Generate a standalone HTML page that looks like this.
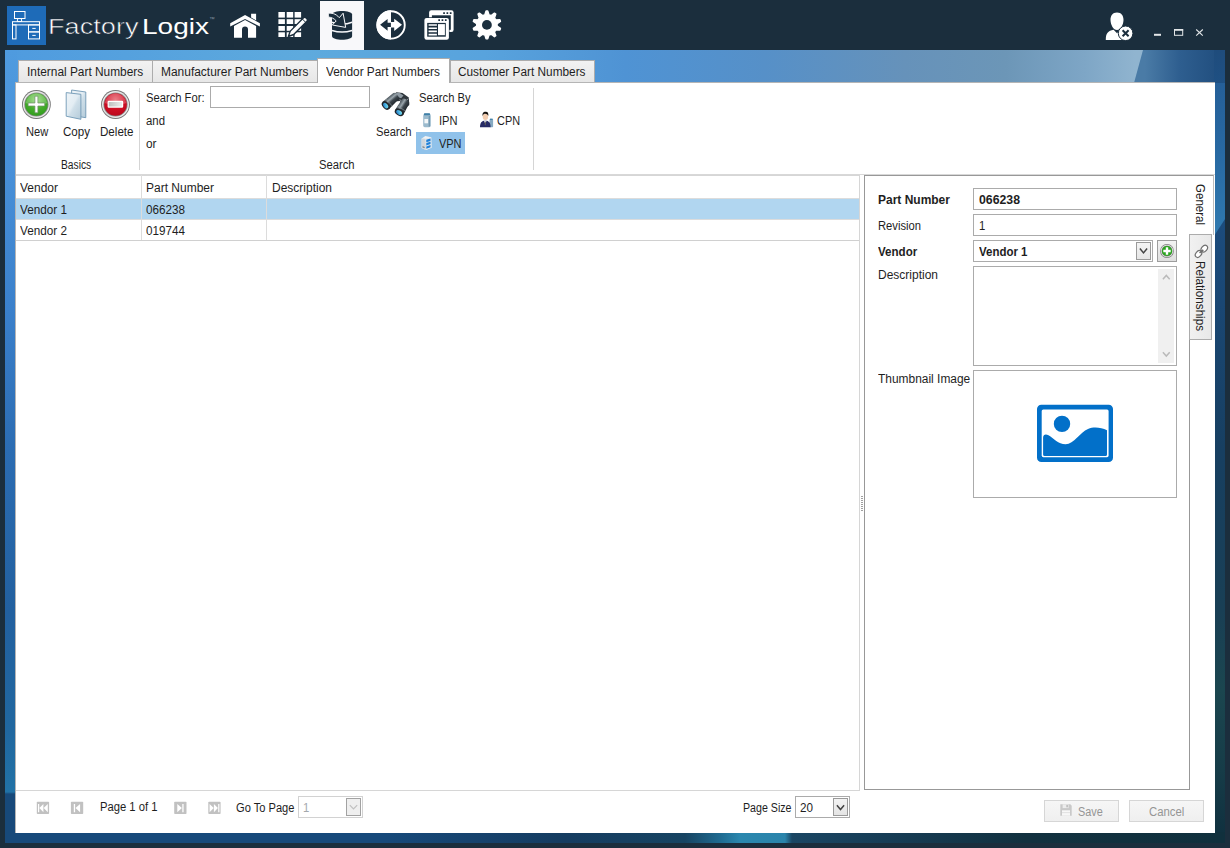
<!DOCTYPE html>
<html><head><meta charset="utf-8"><title>FactoryLogix - Vendor Part Numbers</title>
<style>
*{box-sizing:border-box;margin:0;padding:0}
html,body{width:1230px;height:848px;overflow:hidden;background:#1b2e3d}
body{position:relative;font-family:"Liberation Sans",sans-serif;font-size:12px;color:#1e1e1e}
.abs,.t{position:absolute}
.t{white-space:nowrap;line-height:14px;height:14px;transform-origin:0 50%}
.b{font-weight:bold}
#wall{position:absolute;left:5px;top:50px;width:1220px;height:793px;overflow:hidden;background:#2a6fb5}
.tab{position:absolute;top:60px;height:22px;border:1px solid #acacac;border-bottom:none;background:linear-gradient(#f2f2f2,#e7e7e7)}
.inp{position:absolute;background:#fff;border:1px solid #ababab}
.btn{position:absolute;background:linear-gradient(#f6f6f6,#efefef);border:1px solid #d6d6d6}
.ln{position:absolute;background:#d5d5d5}
</style></head><body>
<div id="wall"><div class="abs" style="left:0;top:0;width:1220px;height:33px;background:linear-gradient(90deg,#4f9bdf 0,#55a1de 120px,#5eaadd 300px,#58a3dd 480px,#4f93d4 620px,#5690c8 760px,#6692ba 900px,#6c96b7 1000px,#7ea6c6 1080px,#90b4cf 1130px)"></div><div class="abs" style="left:1120px;top:0;width:100px;height:33px;background:linear-gradient(90deg,#4a7ba6 20px,#2e5e8f 55px,#1f4c7c 100px);clip-path:polygon(18px 0,100px 0,100px 33px,9px 33px)"></div><div class="abs" style="left:0;top:0;width:12px;height:793px;background:linear-gradient(180deg,#4f9bdf 0,#4890d8 120px,#3a80cb 260px,#2b6cb2 400px,#22609f 560px,#20679f 680px,#2172a6 742px,#17497a 744px,#17497a 793px)"></div><div class="abs" style="left:1209px;top:0;width:11px;height:793px;background:linear-gradient(180deg,#1f4c7c 0,#1e5388 60px,#1b4a7a 200px,#173f61 400px,#193f55 560px,#1b464f 640px,#163c48 720px,#0f2f3e 793px)"></div><div class="abs" style="left:1209px;top:33px;width:11px;height:160px;background:linear-gradient(180deg,#255f98 0,#2869a2 70px,#2f79af 150px);clip-path:polygon(0 0,11px 0,11px 136px,0 153px)"></div><div class="abs" style="left:0;top:782px;width:1220px;height:11px;background:linear-gradient(90deg,#17497a 0,#17497a 380px,#153c60 560px,#174462 680px,#1f6c92 716px,#2a87ae 735px,#2a84ab 780px,#1a4663 787px,#173d56 880px,#12313f 1020px,#10303d 1220px)"></div></div>
<div class="abs" style="left:0;top:0;width:1230px;height:50px;background:#1b2e3d"></div><div class="abs" style="left:7px;top:6px;width:39px;height:39px;background:#1e6bb8"></div><div class="abs" style="left:320px;top:1px;width:44px;height:49px;background:#f8f8fa"></div><div class="t" style="left:48.4px;top:13.8px;font-size:22.5px;line-height:26px;height:26px;transform:scaleX(1.2064);color:#ffffff;-webkit-text-stroke:0.55px #1b2e3d;" id="t0">Factory</div><div class="t" style="left:141.6px;top:13.8px;font-size:22.5px;line-height:26px;height:26px;transform:scaleX(1.2454);color:#ffffff;" id="t1">Logix</div><div class="t" style="left:209.600px;top:15.600px;font-size:5.500px;line-height:6px;height:6px;color:#8c9aa6">™</div>
<svg class="abs" style="left:0;top:0" width="1230" height="50" viewBox="0 0 1230 50"><g fill="none" stroke="#fff" stroke-width="1"><rect x="14.5" y="11.5" width="10.5" height="7"/><path d="M17.8 18.5l-.6 3h4.6l-.6-3"/><rect x="12.5" y="21.7" width="27" height="3.2"/><rect x="12.5" y="24.9" width="3.5" height="14"/><rect x="28.5" y="24.9" width="11" height="7"/><rect x="28.5" y="31.9" width="11" height="7"/><path d="M32.3 28.4h3.4M32.3 35.4h3.4"/></g><g fill="#ffffff"><path d="M245.050 14.900L259.900 23.200V26.600L245.050 18.900 230.200 26.600V23.200z"/><path d="M251.100 13.700h5v6.700l-5-2.800z"/><path d="M245.050 20.100L256.100 26v11.800H248V29.500a3 3 0 0 0-6 0V37.800h-8V26z"/></g><g fill="#ffffff"><rect x="278.4" y="12" width="6.500" height="5.6"/><rect x="278.4" y="19.2" width="6.500" height="4.8"/><rect x="278.4" y="26" width="6.500" height="4.8"/><rect x="278.4" y="32.3" width="6.500" height="4.7"/><rect x="286.7" y="12" width="6.500" height="5.6"/><rect x="286.7" y="19.2" width="6.500" height="4.8"/><rect x="286.7" y="26" width="6.500" height="4.8"/><rect x="286.7" y="32.3" width="6.500" height="4.7"/><rect x="294.6" y="12" width="6.500" height="5.6"/><rect x="294.6" y="19.2" width="6.500" height="4.8"/><rect x="294.6" y="26" width="6.500" height="4.8"/><rect x="294.6" y="32.3" width="6.500" height="4.7"/></g><path d="M288.30 36.50L293.67 34.52L306.97 21.23Q308.17 20.02 306.47 18.33Q304.78 16.63 303.57 17.83L290.28 31.13z" fill="#ffffff" stroke="#1b2e3d" stroke-width="1.400" stroke-linejoin="round"/><path d="M302.37 19.03L305.77 22.43" stroke="#1b2e3d" stroke-width="1" fill="none"/><path d="M288.30 36.50L290.56 35.65L289.15 34.24z" fill="#1b2e3d"/><path d="M332 14.500C332 9.700 352.100 9.700 352.100 14.500V36C352.100 41 332 41 332 36z" fill="#1b2e3d"/><path d="M332 22.200Q342 26 352.100 22.200M332 30.500Q342 33.700 352.100 30.500" stroke="#f8f8fa" stroke-width="1.500" fill="none"/><path d="M328.300 13.400C331 12.800 335.500 13.200 339.300 17.700L343.100 13.200 345.700 27.400 332.300 25 336.200 20.900C334 18.500 331.500 17.300 328.300 17z" fill="#1b2e3d" stroke="#f8f8fa" stroke-width="1" stroke-linejoin="miter"/><circle cx="391.050" cy="24.950" r="13.700" fill="none" stroke="#ffffff" stroke-width="1.900"/><path d="M391 10.350a14.600 14.600 0 0 0 0 29.200z" fill="#ffffff"/><path d="M391 22.700h-3.400v-3.600L380.100 24.850l7.500 5.850v-3.600h3.400z" fill="#1b2e3d"/><path d="M390.900 22h3.300v-3.200L402 24.850l-7.800 6.050v-3.300h-3.300z" fill="#ffffff"/><rect x="429.100" y="10.200" width="24.500" height="21.700" rx="2.200" fill="#ffffff"/><rect x="431.900" y="15.300" width="18.900" height="14.500" fill="#1b2e3d"/><path d="M443.200 13.050h1.700M446.500 13.050h1.700M449.800 13.050h1.700" stroke="#1b2e3d" stroke-width="1.800"/><rect x="423.900" y="17.200" width="25.500" height="23" rx="2.600" fill="#1b2e3d"/><rect x="424.400" y="17.900" width="24.500" height="21.800" rx="2.200" fill="#ffffff"/><rect x="427.200" y="22.900" width="18.600" height="13.800" fill="#1b2e3d"/><path d="M438.300 20.200h1.700M441.600 20.200h1.700M444.900 20.200h1.700" stroke="#1b2e3d" stroke-width="1.700"/><path d="M428.600 25h8.300M428.600 28.200h8.300M428.600 31.400h8.300M428.600 34.600h8.300" stroke="#ffffff" stroke-width="1.600"/><rect x="438" y="24.100" width="6.900" height="11.100" fill="#ffffff"/><path d="M484.85 14.81L486.06 10.93L487.74 10.93L488.95 14.81L491.18 15.53L494.44 13.10L495.79 14.09L494.49 17.94L495.87 19.83L499.93 19.78L500.45 21.38L497.13 23.73L497.13 26.07L500.45 28.42L499.93 30.02L495.87 29.97L494.49 31.86L495.79 35.71L494.44 36.70L491.18 34.27L488.95 34.99L487.74 38.87L486.06 38.87L484.85 34.99L482.62 34.27L479.36 36.70L478.01 35.71L479.31 31.86L477.93 29.97L473.87 30.02L473.35 28.42L476.67 26.07L476.67 23.73L473.35 21.38L473.87 19.78L477.93 19.83L479.31 17.94L478.01 14.09L479.36 13.10L482.62 15.53z" fill="#ffffff" stroke="#ffffff" stroke-width="1.400" stroke-linejoin="round"/><circle cx="486.9" cy="24.9" r="4.900" fill="#1b2e3d"/><path d="M1117 12.500C1121.500 12.500 1123.600 16 1123.500 20 1123.400 25 1120.500 30 1117 30 1113.500 30 1110.600 25 1110.500 20 1110.400 16 1112.500 12.500 1117 12.500z" fill="#ffffff"/><path d="M1105.800 39.900C1105.800 33 1108 31 1113.600 29.800L1117 33.200 1120.400 29.800C1126 31 1128.200 33 1128.200 39.900z" fill="#ffffff"/><circle cx="1125.600" cy="33.300" r="7.300" fill="#ffffff" stroke="#1b2e3d" stroke-width="1"/><path d="M1122.600 30.300l6 6M1128.600 30.300l-6 6" stroke="#1b2e3d" stroke-width="2"/><rect x="1154" y="33.800" width="7" height="2" fill="#e3e6e8"/><rect x="1174.500" y="30" width="8.200" height="5.300" fill="none" stroke="#e3e6e8" stroke-width="1"/><rect x="1174" y="29" width="9.200" height="1.600" fill="#e3e6e8"/><path d="M1196.200 29.500l6.600 6.200M1202.800 29.500l-6.600 6.200" stroke="#e3e6e8" stroke-width="1.100"/></svg>
<div class="abs" style="left:15px;top:82px;width:1200px;height:751px;background:#fff;border-left:1px solid #b5b5b5;border-top:1px solid #b5b5b5"></div><div class="tab" style="left:18px;width:134.5px"></div><div class="tab" style="left:152px;width:166px"></div><div class="tab" style="left:317px;width:133px;top:58px;height:25px;background:#fff;z-index:2"></div><div class="tab" style="left:449.5px;width:145.0px"></div><div style="position:absolute;z-index:3;left:0;top:0"><div class="t" style="left:27px;top:65px;font-size:12px;line-height:14px;height:14px;transform:scaleX(0.9902);" id="t2">Internal Part Numbers</div><div class="t" style="left:161px;top:65px;font-size:12px;line-height:14px;height:14px;transform:scaleX(0.9962);" id="t3">Manufacturer Part Numbers</div><div class="t" style="left:326px;top:65px;font-size:12px;line-height:14px;height:14px;transform:scaleX(0.9879);" id="t4">Vendor Part Numbers</div><div class="t" style="left:458px;top:65px;font-size:12px;line-height:14px;height:14px;transform:scaleX(0.9855);" id="t5">Customer Part Numbers</div></div><div class="abs" style="left:416px;top:132px;width:49px;height:22px;background:#90c2ea"></div><svg class="abs" style="left:0;top:82px" width="620" height="92" viewBox="0 82 620 92"><defs><radialGradient id="gG" cx="50%" cy="30%" r="75%"><stop offset="0" stop-color="#8fd672"/><stop offset=".55" stop-color="#45ad2b"/><stop offset="1" stop-color="#2f9a1c"/></radialGradient><radialGradient id="gR" cx="50%" cy="30%" r="75%"><stop offset="0" stop-color="#e85a66"/><stop offset=".5" stop-color="#d10f25"/><stop offset="1" stop-color="#b8081c"/></radialGradient><linearGradient id="gS" x1="0" y1="0" x2="1" y2="1"><stop offset="0" stop-color="#c9c9c9"/><stop offset=".5" stop-color="#8d8d8d"/><stop offset="1" stop-color="#b5b5b5"/></linearGradient><linearGradient id="gP" x1="0" y1="0" x2="1" y2="1"><stop offset="0" stop-color="#eef4f8"/><stop offset=".45" stop-color="#e3edf3"/><stop offset=".55" stop-color="#cfdfe9"/><stop offset="1" stop-color="#b4cbd9"/></linearGradient><linearGradient id="gS2" x1="0" y1="0" x2="1" y2="1"><stop offset="0" stop-color="#fafafa"/><stop offset=".5" stop-color="#dcdcdc"/><stop offset="1" stop-color="#f4f4f4"/></linearGradient><linearGradient id="gM" x1="0" y1="0" x2="1" y2="0"><stop offset="0" stop-color="#bdbdbd"/><stop offset="1" stop-color="#efefef"/></linearGradient><linearGradient id="gB" x1="0" y1="0" x2="0" y2="1"><stop offset="0" stop-color="#4a545b"/><stop offset=".3" stop-color="#9aa5ac"/><stop offset=".55" stop-color="#3c454c"/><stop offset="1" stop-color="#1d2328"/></linearGradient><linearGradient id="gL" x1="0" y1="0" x2="1" y2="1"><stop offset="0" stop-color="#1d63b8"/><stop offset=".5" stop-color="#49b4e3"/><stop offset="1" stop-color="#8ee9f0"/></linearGradient></defs><circle cx="36.4" cy="104.500" r="14.400" fill="#777"/><circle cx="36.4" cy="104.500" r="13.500" fill="url(#gS2)"/><circle cx="36.4" cy="104.500" r="12.100" fill="#8a8a8a"/><circle cx="36.4" cy="104.500" r="11.300" fill="url(#gG)"/><path d="M25.599999999999998 103a10.900 10.900 0 0 1 21.600 0c-5 2.500-16 2.500-21.600 0z" fill="#fff" opacity=".22"/><circle cx="115.5" cy="104.500" r="14.400" fill="#777"/><circle cx="115.5" cy="104.500" r="13.500" fill="url(#gS2)"/><circle cx="115.5" cy="104.500" r="12.100" fill="#8a8a8a"/><circle cx="115.5" cy="104.500" r="11.300" fill="url(#gR)"/><path d="M104.7 103a10.900 10.900 0 0 1 21.600 0c-5 2.500-16 2.500-21.600 0z" fill="#fff" opacity=".22"/><path d="M34.900 96.200h3v6.800h6.800v3h-6.800v6.800h-3V106h-6.800v-3h6.800z" fill="#fff" stroke="#6e8f66" stroke-width=".7" stroke-linejoin="round"/><path d="M71.600 90l14.200 2v25.700l-14.200-2.300z" fill="url(#gP)" stroke="#6f97b4" stroke-width=".9"/><path d="M66.200 92.600l14.700 1.700v25l-14.700-3.100z" fill="url(#gP)" stroke="#6f97b4" stroke-width=".9"/><rect x="108.200" y="101.300" width="14.400" height="5.800" rx=".6" fill="url(#gM)" stroke="#fff" stroke-width="1.200"/><path d="M391.500 95.500l5-3.300 6 .8 6.300 4.500.5 7.500-3 2.500-6.500-6.500-5 .5z" fill="#2f363c"/><path d="M395.500 93.200l3.800-.4 4.200 2.600-2.400 2.800-4.400-1.600z" fill="#8f9aa3"/><path d="M399.500 99.800l5.500 2.200 3.200-3.400" fill="none" stroke="#aab3ba" stroke-width=".8"/><g transform="translate(385.8 105.5) rotate(-40)"><path d="M0 -4.800H13.5a2 4 0 0 1 0 8.400L0 4.800z" fill="url(#gB)"/><path d="M4.500 -4.700v9.300" stroke="#8e999f" stroke-width=".7" opacity=".8"/><ellipse cx="0" cy="0" rx="3.300" ry="4.800" fill="#20262b"/><ellipse cx="-.2" cy="0" rx="2" ry="3.200" fill="url(#gL)"/></g><g transform="translate(399.2 112.3) rotate(-57)"><path d="M0 -4.800H12.5a2 4 0 0 1 0 8.400L0 4.800z" fill="url(#gB)"/><path d="M4.500 -4.700v9.300" stroke="#8e999f" stroke-width=".7" opacity=".8"/><ellipse cx="0" cy="0" rx="3.300" ry="4.800" fill="#20262b"/><ellipse cx="-.2" cy="0" rx="2" ry="3.200" fill="url(#gL)"/></g><path d="M424.300 113.400h5.400l1.100 2.600v9.600q0 1.600-1.600 1.600h-4.400q-1.600 0-1.600-1.600v-9.600z" fill="#9bbacd"/><path d="M424.300 113.200h5.400l.7 2h-6.800z" fill="#3f80a8"/><rect x="424.400" y="119" width="3.800" height="4.300" fill="#f4f7f9"/><path d="M429.300 116v10.600" stroke="#6f95ad" stroke-width="1.200"/><rect x="489.500" y="119" width="3.600" height="8.200" rx=".8" fill="#86a9c2"/><rect x="490" y="118.600" width="2.600" height="1.300" fill="#3f80a8"/><path d="M480 127.200c0-4.500 1.500-6.400 5.300-6.800 3.800.4 5.300 2.300 5.300 6.800z" fill="#262b66"/><path d="M484 120.600l1.300 3.600 1.300-3.600z" fill="#fff"/><path d="M485 121.500h.7l.3 3-0.650 1-0.650-1z" fill="#555"/><ellipse cx="485.400" cy="116.800" rx="2.700" ry="3.200" fill="#f3cdb0"/><path d="M482.500 116.200c-.3-3.800 1.500-4.600 3.200-4.400 2-.1 3 1.400 2.600 4.200-.8-1.800-2.200-2.400-3.600-2.200-1 .2-1.800 1-2.200 2.400z" fill="#15120f"/><path d="M421.600 138.500l3.800-2.600 5.800 1.400.3 10.400-5.600 2.400-4.300-2.200z" fill="#eef2f5"/><path d="M425.400 138.800l5.800-1.500.3 10.400-5.600 2.400z" fill="#dfe7ee"/><path d="M421.600 138.500l3.800.3.500 11.300-4.300-2.200z" fill="#cfd6dc"/><path d="M426.300 139.800l4.200-1.300v2.400l-4.200 1.400zM426.300 143.100l4.200-1.400v2.400l-4.200 1.400zM426.300 146.400l4.200-1.400v2.300l-4.200 1.500z" fill="#1f80d8"/><path d="M422.500 146.800l2 .8" stroke="#6b747c" stroke-width="1.100"/></svg><div class="t" style="left:26.02px;top:125px;font-size:12px;line-height:14px;height:14px;transform:scaleX(0.9257);" id="t6">New</div><div class="t" style="left:62.5px;top:125px;font-size:12px;line-height:14px;height:14px;transform:scaleX(0.9637);" id="t7">Copy</div><div class="t" style="left:99.5px;top:125px;font-size:12px;line-height:14px;height:14px;transform:scaleX(0.9660);" id="t8">Delete</div><div class="t" style="left:61.48px;top:158px;font-size:12px;line-height:14px;height:14px;transform:scaleX(0.8552);" id="t9">Basics</div><div class="ln" style="left:139px;top:88px;width:1px;height:82px"></div><div class="t" style="left:146.02px;top:91px;font-size:12px;line-height:14px;height:14px;transform:scaleX(0.9337);" id="t10">Search For:</div><div class="t" style="left:146.02px;top:114px;font-size:12px;line-height:14px;height:14px;transform:scaleX(0.9485);" id="t11">and</div><div class="t" style="left:146.02px;top:137px;font-size:12px;line-height:14px;height:14px;transform:scaleX(0.9860);" id="t12">or</div><div class="inp" style="left:210px;top:86px;width:160px;height:22px"></div><div class="t" style="left:376.48px;top:125px;font-size:12px;line-height:14px;height:14px;transform:scaleX(0.9341);" id="t13">Search</div><div class="t" style="left:419.26px;top:91px;font-size:12px;line-height:14px;height:14px;transform:scaleX(0.9299);" id="t14">Search By</div><div class="t" style="left:438.76px;top:114px;font-size:12px;line-height:14px;height:14px;transform:scaleX(0.9256);" id="t15">IPN</div><div class="t" style="left:497.48px;top:114px;font-size:12px;line-height:14px;height:14px;transform:scaleX(0.9089);" id="t16">CPN</div><div class="t" style="left:438.76px;top:137px;font-size:12px;line-height:14px;height:14px;transform:scaleX(0.9124);" id="t17">VPN</div><div class="t" style="left:318.74px;top:158px;font-size:12px;line-height:14px;height:14px;transform:scaleX(0.9341);" id="t18">Search</div><div class="ln" style="left:533px;top:88px;width:1px;height:82px"></div><div class="abs" style="left:16px;top:174px;width:1199px;height:1px;background:#d8d8d8"></div><div class="abs" style="left:16px;top:175px;width:844px;height:616px;border:1px solid #d6d6d6;border-left:none;background:#fff"></div><div class="abs" style="left:16px;top:199px;width:843px;height:20px;background:#b1d6f0"></div><div class="ln" style="left:16px;top:198px;width:843px;height:1px;background:#dcdcdc"></div><div class="ln" style="left:16px;top:219px;width:843px;height:1px;background:#dcdcdc"></div><div class="ln" style="left:16px;top:240px;width:843px;height:1px;background:#d0d0d0"></div><div class="ln" style="left:141px;top:175px;width:1px;height:65px;background:#dcdcdc"></div><div class="ln" style="left:266px;top:175px;width:1px;height:65px;background:#dcdcdc"></div><div class="t" style="left:20.48px;top:181px;font-size:12px;line-height:14px;height:14px;transform:scaleX(0.9988);" id="t19">Vendor</div><div class="t" style="left:146px;top:181px;font-size:12px;line-height:14px;height:14px;transform:scaleX(0.9995);" id="t20">Part Number</div><div class="t" style="left:271.52px;top:181px;font-size:12px;line-height:14px;height:14px;transform:scaleX(0.9995);" id="t21">Description</div><div class="t" style="left:20.48px;top:203px;font-size:12px;line-height:14px;height:14px;transform:scaleX(0.9782);" id="t22">Vendor 1</div><div class="t" style="left:146px;top:203px;font-size:12px;line-height:14px;height:14px;transform:scaleX(0.9739);" id="t23">066238</div><div class="t" style="left:20.48px;top:224px;font-size:12px;line-height:14px;height:14px;transform:scaleX(0.9782);" id="t24">Vendor 2</div><div class="t" style="left:146px;top:224px;font-size:12px;line-height:14px;height:14px;transform:scaleX(0.9739);" id="t25">019744</div><div class="abs" style="left:861px;top:496px;width:2px;height:15px;background:repeating-linear-gradient(180deg,#a0a0a0 0,#a0a0a0 1px,#fff 1px,#fff 2px)"></div><svg class="abs" style="left:30px;top:798px" width="200" height="20" viewBox="30 798 200 20"><rect x="36.8" y="801.700" width="12.300" height="12.400" rx=".8" fill="#c1c1c1"/><rect x="70.9" y="801.700" width="12.300" height="12.400" rx=".8" fill="#c1c1c1"/><rect x="174.2" y="801.700" width="12.300" height="12.400" rx=".8" fill="#c1c1c1"/><rect x="208.3" y="801.700" width="12.300" height="12.400" rx=".8" fill="#c1c1c1"/><path d="M38 804h1.200v8.200H38zM43.400 804v8.200l-4-4.100zM47.800 804v8.200l-4.100-4.100z" fill="#fff"/><path d="M73.800 804h1.300v8.200h-1.300zM80.100 804v8.200l-4.600-4.100z" fill="#fff"/><path d="M182.300 804h1.300v8.200h-1.300zM177.300 804v8.200l4.600-4.100z" fill="#fff"/><path d="M218.200 804h1.200v8.200h-1.200zM209.600 804v8.200l4.100-4.100zM213.900 804v8.200l4-4.100z" fill="#fff"/></svg><div class="t" style="left:99.5px;top:800px;font-size:12px;line-height:14px;height:14px;transform:scaleX(0.9367);" id="t26">Page 1 of 1</div><div class="t" style="left:236px;top:801px;font-size:12px;line-height:14px;height:14px;transform:scaleX(0.9258);" id="t27">Go To Page</div><div class="inp" style="left:298px;top:796px;width:65px;height:22px;border-color:#d2d2d2"></div><div class="t" style="left:303.18px;top:801px;font-size:12px;line-height:14px;height:14px;transform:scaleX(0.9400);color:#a4a8ad;" id="t28">1</div><div class="btn" style="left:346px;top:798px;width:15px;height:18px;border-color:#a2a2a2;background:#efefef"></div><div class="t" style="left:742.76px;top:801px;font-size:12px;line-height:14px;height:14px;transform:scaleX(0.8867);" id="t29">Page Size</div><div class="inp" style="left:795px;top:796px;width:55px;height:22px"></div><div class="t" style="left:800px;top:801px;font-size:12px;line-height:14px;height:14px;transform:scaleX(0.9731);" id="t30">20</div><div class="btn" style="left:833px;top:798px;width:15px;height:18px;border-color:#9a9a9a;background:linear-gradient(#f3f3f3,#e4e4e4)"></div><svg class="abs" style="left:340px;top:798px" width="520" height="20" viewBox="340 798 520 20"><path d="M349.800 805.200l3.700 3.800 3.700-3.800" fill="none" stroke="#c0c0c0" stroke-width="1.200"/><path d="M836.900 805.300l3.600 4.300 3.600-4.300" fill="none" stroke="#444" stroke-width="1.500"/></svg><div class="btn" style="left:1044px;top:800px;width:75px;height:22px"></div><div class="btn" style="left:1129px;top:800px;width:75px;height:22px"></div><div class="t" style="left:1078.24px;top:805px;font-size:12px;line-height:14px;height:14px;transform:scaleX(0.9060);color:#959595;" id="t31">Save</div><div class="t" style="left:1149px;top:805px;font-size:12px;line-height:14px;height:14px;transform:scaleX(0.9446);color:#959595;" id="t32">Cancel</div><svg class="abs" style="left:1060px;top:804px" width="12" height="12" viewBox="0 0 12 12"><path d="M.3.300h10l1.400 1.400v10H.3z" fill="#c9c9c9"/><rect x="2.600" y=".3" width="6" height="3.800" fill="#ececec"/><rect x="6.400" y=".9" width="1.400" height="2.400" fill="#b5b5b5"/><rect x="2" y="6.300" width="8" height="5.400" fill="#f7f7f7"/><path d="M2 8.600h8" stroke="#d8d8d8" stroke-width=".7"/></svg>
<div class="abs" style="left:864px;top:175px;width:326px;height:615px;border:1px solid #989898;background:#fff"></div><div class="abs" style="left:1190px;top:175px;width:24px;height:60px;border-top:1px solid #989898;border-right:1px solid #bdbdbd;background:#fff"></div><div class="abs" style="left:1189px;top:176px;width:1px;height:58px;background:#fff"></div><div class="abs" style="left:1189px;top:234px;width:23px;height:106px;border:1px solid #acacac;background:linear-gradient(90deg,#f1f1f1,#e8e8e8)"></div><div class="t" style="left:1200px;top:184.200px;transform-origin:0 0;transform:rotate(90deg) translate(0,-7px) scaleX(.962)">General</div><div class="t" style="left:1200px;top:260.800px;transform-origin:0 0;transform:rotate(90deg) translate(0,-7px) scaleX(.972)">Relationships</div><svg class="abs" style="left:1192px;top:242px" width="18" height="18" viewBox="1192 242 18 18"><g fill="#fff" stroke="#6f6f6f" stroke-width="1.200"><ellipse cx="1198.500" cy="254" rx="3.800" ry="2.700" transform="rotate(-50 1198.500 254)"/><ellipse cx="1204.300" cy="248.600" rx="3.800" ry="2.700" transform="rotate(-50 1204.300 248.600)"/></g><path d="M1199.500 252.800l3.800-3" stroke="#6f6f6f" stroke-width="1.600" fill="none"/></svg><div class="t b" style="left:877.52px;top:193px;font-size:12px;line-height:14px;height:14px;transform:scaleX(0.9990);" id="t33">Part Number</div><div class="t" style="left:877.52px;top:219px;font-size:12px;line-height:14px;height:14px;transform:scaleX(0.9341);" id="t34">Revision</div><div class="t b" style="left:877.52px;top:245px;font-size:12px;line-height:14px;height:14px;transform:scaleX(0.9639);" id="t35">Vendor</div><div class="t" style="left:877.52px;top:268px;font-size:12px;line-height:14px;height:14px;transform:scaleX(0.9995);" id="t36">Description</div><div class="t" style="left:877.52px;top:372px;font-size:12px;line-height:14px;height:14px;transform:scaleX(0.9949);" id="t37">Thumbnail Image</div><div class="inp" style="left:973px;top:188px;width:204px;height:22px"></div><div class="inp" style="left:973px;top:214px;width:204px;height:22px"></div><div class="inp" style="left:973px;top:240px;width:180px;height:22px"></div><div class="btn" style="left:1136px;top:242px;width:15px;height:18px;border-color:#9a9a9a;background:linear-gradient(#f4f4f4,#e6e6e6)"></div><div class="btn" style="left:1157px;top:240px;width:20px;height:22px;border-color:#9d9d9d;background:linear-gradient(#f3f3f3,#dfdfdf)"></div><div class="t b" style="left:978.5px;top:193px;font-size:12px;line-height:14px;height:14px;transform:scaleX(1.0238);" id="t38">066238</div><div class="t" style="left:978.5px;top:219px;font-size:12px;line-height:14px;height:14px;transform:scaleX(0.9400);" id="t39">1</div><div class="t b" style="left:978.5px;top:245px;font-size:12px;line-height:14px;height:14px;transform:scaleX(0.9564);" id="t40">Vendor 1</div><div class="inp" style="left:973px;top:266px;width:204px;height:100px"></div><div class="abs" style="left:1158px;top:269px;width:16px;height:94px;background:#f0f0f0"></div><div class="inp" style="left:973px;top:370px;width:204px;height:128px"></div><svg class="abs" style="left:1130px;top:240px" width="50" height="130" viewBox="1130 240 50 130"><path d="M1139.900 248.500l3.600 4.400 3.600-4.400" fill="none" stroke="#444" stroke-width="1.500"/><path d="M1162.900 279.200l3.400-3.800 3.400 3.800M1162.900 352.300l3.400 3.800 3.400-3.800" fill="none" stroke="#bababa" stroke-width="1.500"/><circle cx="1167" cy="251" r="6.900" fill="#7c7c7c"/><circle cx="1167" cy="251" r="6.200" fill="#eeeeee"/><circle cx="1167" cy="251" r="5.500" fill="#8a8a8a"/><circle cx="1167" cy="251" r="5.100" fill="#2aa51e"/><path d="M1165.800 247.300h2.400v2.500h2.500v2.400h-2.500v2.500h-2.400v-2.500h-2.500v-2.400h2.500z" fill="#fff"/></svg><svg class="abs" style="left:1036px;top:404px" width="78" height="59" viewBox="1036 404 78 59"><rect x="1037" y="404.800" width="76" height="57.300" rx="4.300" fill="#0270c9"/><rect x="1041.700" y="409.500" width="66.900" height="47.700" rx="1.600" fill="#fff"/><circle cx="1062" cy="423.900" r="8.200" fill="#0270c9"/><path d="M1043.100 454.600V437.500C1043.100 434.300 1046 433.800 1048.500 435.300 1054 438.600 1058 444.200 1065.600 444.200 1074 444.200 1080 432 1088 429 1094 426.500 1101 427.500 1107 430.300V454.600Q1107 456.100 1105.500 456.100H1044.600Q1043.100 456.100 1043.100 454.600z" fill="#0270c9"/></svg>
</body></html>
